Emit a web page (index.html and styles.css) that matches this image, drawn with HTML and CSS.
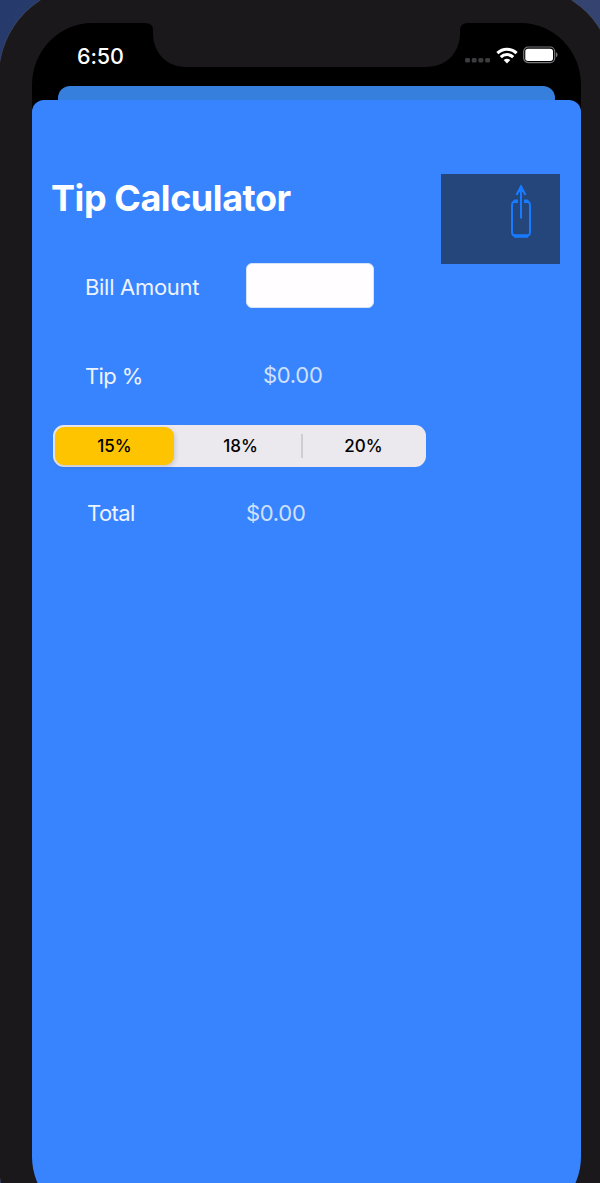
FILE: index.html
```html
<!DOCTYPE html>
<html lang="en">
<head>
<meta charset="utf-8">
<title>Tip Calculator</title>
<link rel="stylesheet" href="styles.css">
</head>
<body>
<div class="phone">
  <div class="screen">
    <header class="status">
      <span class="time">6:50</span>
      <svg class="notch" width="323" height="44" viewBox="0 0 323 44"><path d="M0 0H323Q315 0 315 7V10C315 30 301 44 281 44H41C22 44 8 30 8 10V7Q8 0 0 0Z" fill="#1a181b"/></svg>
      <div class="indicators">
        <svg width="26" height="6" viewBox="0 0 26 6" fill="#3c3b3e"><rect x="0" y="1" width="5" height="4.500" rx="1.500"/><rect x="6.700" y="1" width="5" height="4.500" rx="1.500"/><rect x="13.400" y="1" width="5" height="4.500" rx="1.500"/><rect x="20.100" y="1" width="5" height="4.500" rx="1.500"/></svg>
        <svg class="wifi" width="22" height="17" viewBox="0 0 22 17"><g fill="none" stroke="#fff" stroke-width="3.100"><path d="M1.400 6.200A13.600 13.600 0 0 1 20.600 6.200"/><path d="M4.800 10.100A8.800 8.800 0 0 1 17.200 10.100"/></g><path d="M7.700 13Q11 10.400 14.300 13L11 16.600Z" fill="#fff"/></svg>
        <svg class="battery" width="36" height="18" viewBox="0 0 36 18"><rect x=".7" y="1" width="31" height="15.600" rx="4.500" fill="none" stroke="#77767a" stroke-width="1.200"/><rect x="2.300" y="2.700" width="27.700" height="12.200" rx="2.700" fill="#fff"/><path d="M33 6.300Q34.600 7 34.600 8.800T33 11.300Z" fill="#77767a"/></svg>
      </div>
    </header>
    <div class="back-sheet"></div>
    <main class="sheet">
      <div class="top">
        <h1>Tip Calculator</h1>
        <button class="share" aria-label="Share">
          <svg width="22" height="56" viewBox="0 0 22 56" fill="none" stroke="#187aff"><path d="M7.500 18H6Q2 18 2 22.500V49Q2 53 6 53H16Q20 53 20 49V22.500Q20 18 16 18H14.500" stroke-width="2"/><path d="M4 53H18" stroke-width="3.400"/><path d="M8 18.300H4M14 18.300H18" stroke-width="3.400"/><path d="M11 35.500V4" stroke-width="2"/><path d="M6.500 12L11 3.500L15.500 12" stroke-width="2.200"/><path d="M11 2L14 9H8Z" fill="#187aff" stroke="none"/></svg>
        </button>
      </div>
      <div class="row bill"><label for="bill">Bill Amount</label><input id="bill" type="text"></div>
      <div class="row tip"><span>Tip %</span><span class="amount">$0.00</span></div>
      <div class="segments">
        <button class="segment selected">15%</button>
        <button class="segment">18%</button>
        <span class="divider"></span>
        <button class="segment">20%</button>
      </div>
      <div class="row total"><span>Total</span><span class="amount">$0.00</span></div>
    </main>
  </div>
</div>
</body>
</html>
```
FILE: styles.css
```css
* { box-sizing: border-box; }
html, body { height: 100%; overflow: hidden; }
body {
  margin: 0;
  background: linear-gradient(90deg, #263a6c, #34436f);
  font-family: Inter, "Liberation Sans", sans-serif;
  color: #fff;
}
button { border: 0; padding: 0; font: inherit; }
.phone {
  width: 614px;
  height: 1268px;
  margin: -14px 0 0 -1px;
  padding: 37px 32px 35px 33px;
  border-radius: 90px;
  background: #1a181b;
  box-shadow: 0 0 1px #777;
}
.screen {
  display: flex;
  flex-direction: column;
  height: 1196px;
  border-radius: 60px / 62px;
  overflow: hidden;
  background: #000;
}
.status {
  display: flex;
  flex: 0 0 63px;
  align-items: flex-start;
}
.time {
  width: 113px;
  padding: 20px 0 0 45px;
  font-size: 21.5px;
  line-height: 26px;
  font-weight: 500;
  letter-spacing: -.1px;
}
.notch { flex: none; }
.indicators {
  display: flex;
  align-items: center;
  padding: 23px 0 0;
  margin-left: -3px;
}
.indicators svg { flex: none; }
.indicators svg:first-child { margin-top: 10px; }
.wifi { margin-left: 5px; }
.battery { margin-left: 5px; }
.back-sheet {
  flex: 0 0 14px;
  margin: 0 26px;
  border-radius: 12px 12px 0 0;
  background: #377fdd;
}
.sheet {
  flex: 1;
  border-radius: 12px 12px 0 0;
  background: #3884ff;
}
.top {
  display: flex;
  justify-content: space-between;
  padding: 74px 21px 0 19px;
}
h1 {
  margin: 2px 0 0;
  font-size: 36px;
  line-height: 44px;
  font-weight: 700;
  letter-spacing: -.45px;
}
.share {
  display: flex;
  justify-content: flex-end;
  width: 119px;
  height: 90px;
  padding: 9px 28px 0 0;
  background: #24467a;
}
.row {
  display: flex;
  align-items: center;
  font-size: 22px;
  line-height: 28px;
  letter-spacing: -.3px;
  color: #edf3ff;
}
.bill { margin-top: -1px; padding-left: 53px; }
.bill label { width: 161px; padding-top: 2px; }
.bill input {
  width: 128px;
  height: 45px;
  padding: 0 8px;
  border: 1px solid #d5e2fa;
  border-radius: 6px;
  background: #fffdff;
}
.tip { margin-top: 54px; padding-left: 53px; }
.tip span:first-child { width: 178px; letter-spacing: -.6px; }
.total { margin-top: 32px; padding-left: 55px; }
.total span:first-child { width: 159px; letter-spacing: -.6px; }
.row .amount { color: #d0e0fb; }
.tip .amount { margin-top: -3px; }
.segments {
  display: flex;
  align-items: center;
  width: 373px;
  height: 42px;
  margin: 35px 0 0 21px;
  padding: 2px;
  border-radius: 11px;
  background: #ebe9ed;
}
.segment {
  flex: 1;
  height: 38px;
  font-size: 17px;
  font-weight: 500;
  color: #000;
  background: none;
}
.segment.selected {
  flex: 0 0 119px;
  margin-right: 6px;
  border-radius: 9px;
  background: #ffc400;
  box-shadow: 1px 2px 5px rgba(0, 0, 0, .16);
}
.divider { width: 2px; height: 24px; background: #cfcdd1; }
```
